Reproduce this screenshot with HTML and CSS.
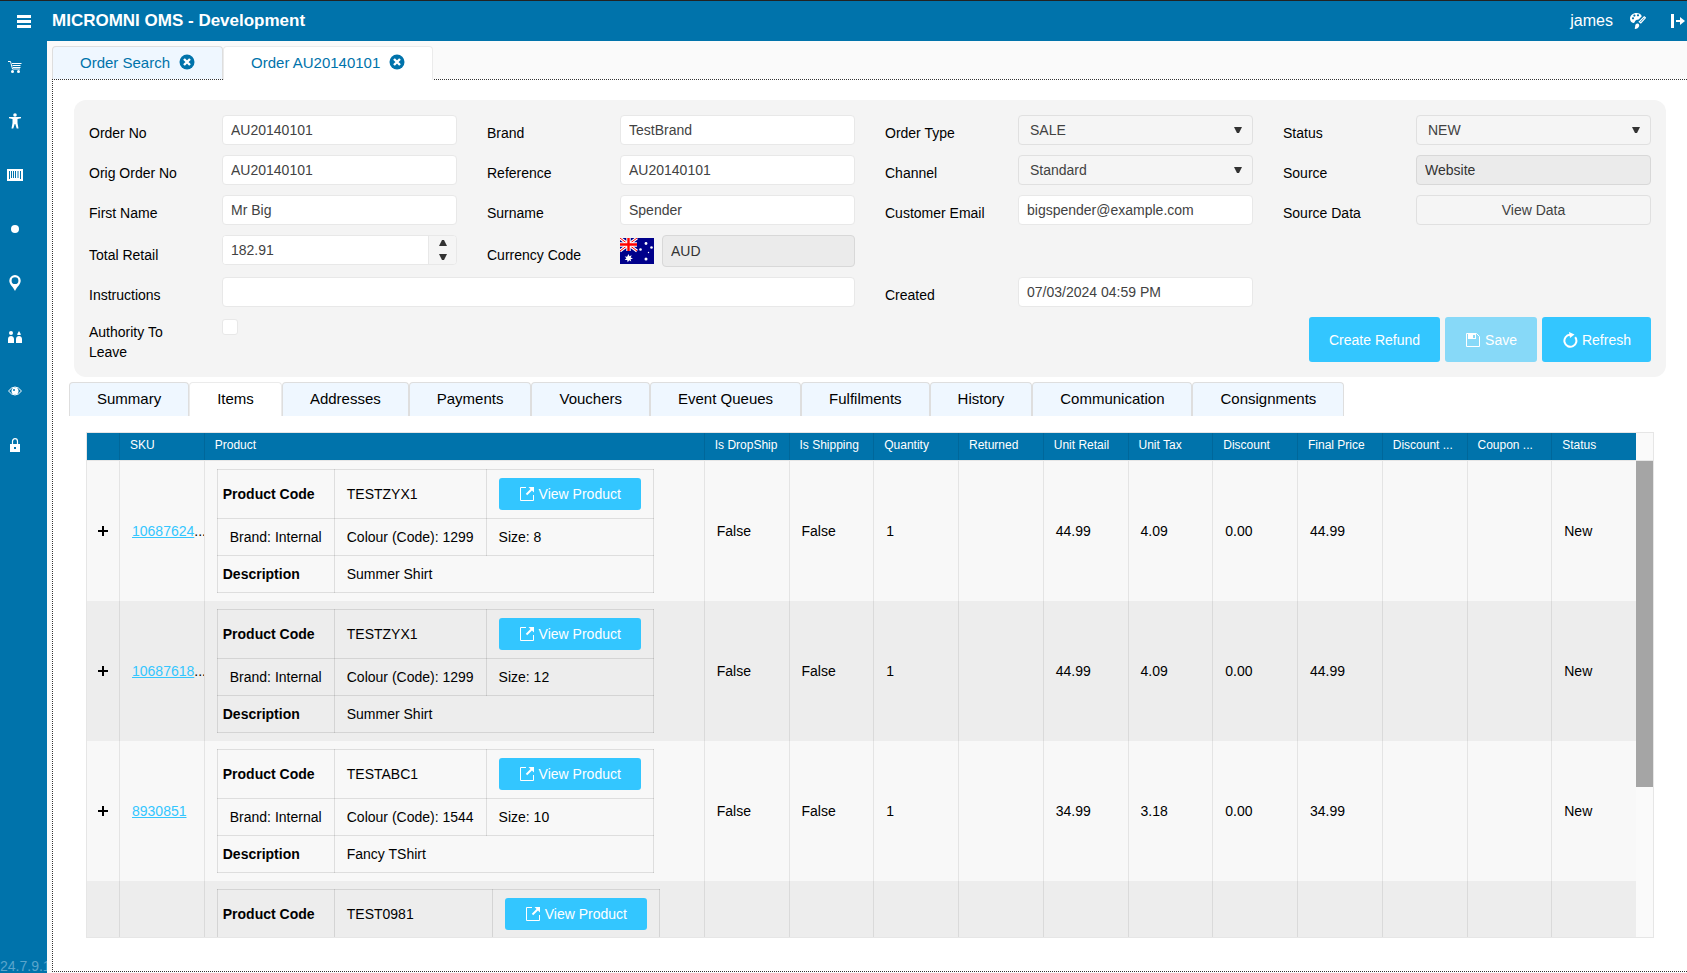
FILE: index.html
```html
<!DOCTYPE html>
<html lang="en">
<head>
    <meta charset="UTF-8">
    <meta name="viewport" content="width=device-width, initial-scale=1.0">
    <title>MICROMNI OMS - Development</title>
    <link rel="stylesheet" href="styles.css">
</head>
<body>
    <!-- Shared icons -->
    <svg class="sprite" aria-hidden="true">
        <symbol id="i-open" viewBox="0 0 16 16">
            <path d="M7 1.500H1.500v13h13V9" fill="none" stroke="currentColor"/>
            <path d="M9.500 1H15v5.500z" fill="currentColor"/>
            <path d="M7.500 8.500L13 3" stroke="currentColor" stroke-width="2"/>
        </symbol>
        <symbol id="i-close" viewBox="0 0 16 16">
            <circle cx="8" cy="8" r="7.5" fill="currentColor"/>
            <path d="M5 5l6 6M11 5l-6 6" stroke="#fff" stroke-width="2.4"/>
        </symbol>
        <symbol id="i-plus" viewBox="0 0 10 10">
            <path d="M5 0v10M0 5h10" stroke="currentColor" stroke-width="2"/>
        </symbol>
    </svg>

    <header class="topbar">
        <button class="icon-btn menu-btn" aria-label="Menu">
            <svg width="14" height="13" viewBox="0 0 14 13"><path d="M0 0h14v3H0zM0 5h14v3H0zM0 10h14v3H0z" fill="currentColor"/></svg>
        </button>
        <h1 class="title">MICROMNI OMS - Development</h1>
        <span class="user">james</span>
        <button class="icon-btn theme-btn" aria-label="Theme">
            <svg width="16" height="16" viewBox="0 0 16 16">
                <path fill-rule="evenodd" fill="currentColor" d="M6.500 0C2.800 0 0 2.600 0 5.600 0 8.200 1.600 10 3.300 10 5 10 4.500 8 6 7.200 7.400 6.400 8.200 7.300 9.400 5.800L11.800 3.200C11 1.200 9 0 6.500 0zM3 4.200a1.100 1.100 0 1 0 0 2.200 1.100 1.100 0 0 0 0-2.200zM4.400 1.500a1.100 1.100 0 1 0 0 2.200 1.100 1.100 0 0 0 0-2.200zM8 1.200a1.100 1.100 0 1 0 0 2.200 1.100 1.100 0 0 0 0-2.200z"/>
                <path fill="currentColor" d="M5 16c-.6-.8.2-1.600.2-3 0-1.700 1.200-2.600 2.400-2.400 1.300.2 2 1.300 1.500 2.700C8.500 15 7 15.800 5 16z"/>
                <path fill="none" stroke="currentColor" stroke-width="1.200" d="M9.200 8.800l5-5 1.200 1-4.600 5.200z"/>
            </svg>
        </button>
        <button class="icon-btn logout-btn" aria-label="Log out">
            <svg width="14" height="14" viewBox="0 0 14 14"><path d="M0 0h3v14H0zM5 6h4V3l5 4-5 4V8H5z" fill="currentColor"/></svg>
        </button>
    </header>

    <div class="layout">
        <nav class="sidebar">
            <a href="#" aria-label="Orders"><svg width="14" height="14" viewBox="0 0 14 14"><path d="M0 1.500h2.500l2 7.500H12" fill="none" stroke="currentColor"/><path d="M4 3.500h9.500M4.500 5.500h8M5 7.500h7.500" stroke="currentColor"/><circle cx="4.500" cy="11.500" r="1.500" fill="currentColor"/><circle cx="10.500" cy="11.500" r="1.500" fill="currentColor"/></svg></a>
            <a href="#" aria-label="Customers"><svg width="14" height="16" viewBox="0 0 14 16"><circle cx="7" cy="2" r="1.800" fill="currentColor"/><path d="M1 4h12v1.300L9.500 6v4l1 5.500H8.700L7.300 11h-.6l-1.400 4.500H3.500l1-5.500V6L1 5.300z" fill="currentColor"/></svg></a>
            <a href="#" aria-label="Products"><svg width="16" height="12" viewBox="0 0 16 12"><path d="M0 0h16v12H0z" fill="currentColor"/><path d="M2.500 2v8M4.500 2v7M6.500 2v7M8.500 2v7M11 2v7M13.500 2v8" stroke="#0073ab"/></svg></a>
            <a href="#" aria-label="Stock"><svg width="8" height="8" viewBox="0 0 8 8"><circle cx="4" cy="4" r="4" fill="currentColor"/></svg></a>
            <a href="#" aria-label="Locations"><svg width="12" height="16" viewBox="0 0 12 16"><path fill-rule="evenodd" d="M6 0a5.700 5.700 0 0 0-5.700 5.700C.3 9.500 4 11.500 6 16c2-4.500 5.700-6.500 5.700-10.300A5.700 5.700 0 0 0 6 0zm0 2.300a3.400 3.400 0 1 1 0 6.800 3.400 3.400 0 0 1 0-6.800z" fill="currentColor"/></svg></a>
            <a href="#" aria-label="Users"><svg width="14" height="12" viewBox="0 0 14 12"><circle cx="3" cy="2" r="2" fill="currentColor"/><path d="M0 12V8c0-4 6-4 6 0v4zM8 12V8c0-4 6-4 6 0v4zM11 0l2 3.500q-2 1-4 0z" fill="currentColor"/></svg></a>
            <a href="#" aria-label="Monitor"><svg width="14" height="10" viewBox="0 0 14 10"><path d="M.5 5Q3.500 1 7 1t6.500 4Q10.500 9 7 9T.5 5z" fill="none" stroke="currentColor"/><circle cx="7" cy="5" r="3.500" fill="currentColor"/><circle cx="6" cy="4" r="1" fill="#0073ab"/></svg></a>
            <a href="#" aria-label="Security"><svg width="10" height="14" viewBox="0 0 10 14"><path d="M2.500 6V3.500a2.500 2.800 0 0 1 5 0V6" fill="none" stroke="currentColor" stroke-width="1.200"/><path fill-rule="evenodd" d="M0 6h10v8H0zM4 9v2h2V9z" fill="currentColor"/></svg></a>
            <span class="version">24.7.9.1</span>
        </nav>

        <main class="main">
            <ul class="tabs page-tabs">
                <li class="tab">
                    <a href="#">Order Search</a>
                    <button class="close-btn" aria-label="Close Order Search"><svg><use href="#i-close"/></svg></button>
                </li>
                <li class="tab active">
                    <a href="#">Order AU20140101</a>
                    <button class="close-btn" aria-label="Close Order AU20140101"><svg><use href="#i-close"/></svg></button>
                </li>
            </ul>

            <section class="panel">
                <form class="order-form">
                    <div class="field">
                        <label for="orderNo">Order No</label>
                        <input class="control" id="orderNo" type="text" value="AU20140101">
                    </div>
                    <div class="field">
                        <label for="brand">Brand</label>
                        <input class="control" id="brand" type="text" value="TestBrand">
                    </div>
                    <div class="field">
                        <label for="orderType">Order Type</label>
                        <select class="control" id="orderType"><option>SALE</option></select>
                    </div>
                    <div class="field">
                        <label for="status">Status</label>
                        <select class="control" id="status"><option>NEW</option></select>
                    </div>

                    <div class="field">
                        <label for="origOrderNo">Orig Order No</label>
                        <input class="control" id="origOrderNo" type="text" value="AU20140101">
                    </div>
                    <div class="field">
                        <label for="reference">Reference</label>
                        <input class="control" id="reference" type="text" value="AU20140101">
                    </div>
                    <div class="field">
                        <label for="channel">Channel</label>
                        <select class="control" id="channel"><option>Standard</option></select>
                    </div>
                    <div class="field">
                        <label for="source">Source</label>
                        <input class="control" id="source" type="text" value="Website" readonly>
                    </div>

                    <div class="field">
                        <label for="firstName">First Name</label>
                        <input class="control" id="firstName" type="text" value="Mr Big">
                    </div>
                    <div class="field">
                        <label for="surname">Surname</label>
                        <input class="control" id="surname" type="text" value="Spender">
                    </div>
                    <div class="field">
                        <label for="email">Customer Email</label>
                        <input class="control" id="email" type="email" value="bigspender@example.com">
                    </div>
                    <div class="field">
                        <label for="sourceData">Source Data</label>
                        <button class="control view-data" id="sourceData" type="button">View Data</button>
                    </div>

                    <div class="field">
                        <label for="totalRetail">Total Retail</label>
                        <div class="control spinner">
                            <input id="totalRetail" type="text" value="182.91">
                            <div class="spinner-btns">
                                <button type="button" aria-label="Increase"><svg width="8" height="6" viewBox="0 0 8 6"><path d="M3 0h2l3 6H0z" fill="currentColor"/></svg></button>
                                <button type="button" aria-label="Decrease"><svg width="8" height="6" viewBox="0 0 8 6"><path d="M3 6h2l3-6H0z" fill="currentColor"/></svg></button>
                            </div>
                        </div>
                    </div>
                    <div class="field">
                        <label for="currency">Currency Code</label>
                        <div class="currency-row">
                            <svg class="flag" width="34" height="26" viewBox="0 0 34 26" role="img" aria-label="Australia">
                                <path d="M0 0h34v26H0z" fill="#00008b"/>
                                <path d="M0 0l17 13M17 0L0 13" stroke="#fff" stroke-width="3"/>
                                <path d="M0 0l17 13M17 0L0 13" stroke="#f00" stroke-width="1"/>
                                <path d="M8.500 0v13M0 6.500h17" stroke="#fff" stroke-width="4.400"/>
                                <path d="M8.500 0v13M0 6.500h17" stroke="#f00" stroke-width="2.400"/>
                                <path d="M8.500 16l.9 2.300 2.300-1-1 2.200 2.300 1-2.400.7.600 2.400-2-1.300-1.500 2-.5-2.400-2.500.2 1.700-1.800-1.700-1.700 2.400.2z" fill="#fff"/>
                                <g fill="#fff"><circle cx="26" cy="5.500" r="1.400"/><circle cx="20.500" cy="11.500" r="1.300"/><circle cx="31.500" cy="9.500" r="1.300"/><circle cx="28.500" cy="14.500" r=".7"/><circle cx="26" cy="21" r="1.500"/></g>
                            </svg>
                            <input class="control" id="currency" type="text" value="AUD" readonly>
                        </div>
                    </div>

                    <div class="field wide new-row">
                        <label for="instructions">Instructions</label>
                        <input class="control" id="instructions" type="text">
                    </div>
                    <div class="field">
                        <label for="created">Created</label>
                        <input class="control" id="created" type="text" value="07/03/2024 04:59 PM">
                    </div>

                    <div class="field leave new-row">
                        <label for="atl">Authority To Leave</label>
                        <input class="check" id="atl" type="checkbox">
                    </div>
                    <div class="actions">
                        <button class="btn" type="button">Create Refund</button>
                        <button class="btn" type="button" disabled>
                            <svg viewBox="0 0 16 16"><path d="M1.500 1.500h10l3 3v10h-13z" fill="none" stroke="currentColor"/><path fill-rule="evenodd" d="M3 2h8v5H3zM8 3v3h2V3z" fill="currentColor"/></svg>
                            Save
                        </button>
                        <button class="btn" type="button">
                            <svg viewBox="0 0 16 16"><path d="M13.200 5.200A6 6 0 1 1 8 2.800" fill="none" stroke="currentColor" stroke-width="2"/><path d="M7 0l5.500 2.500L8 6z" fill="currentColor"/></svg>
                            Refresh
                        </button>
                    </div>
                </form>

                <ul class="tabs sub-tabs">
                    <li class="tab"><a href="#">Summary</a></li>
                    <li class="tab active"><a href="#">Items</a></li>
                    <li class="tab"><a href="#">Addresses</a></li>
                    <li class="tab"><a href="#">Payments</a></li>
                    <li class="tab"><a href="#">Vouchers</a></li>
                    <li class="tab"><a href="#">Event Queues</a></li>
                    <li class="tab"><a href="#">Fulfilments</a></li>
                    <li class="tab"><a href="#">History</a></li>
                    <li class="tab"><a href="#">Communication</a></li>
                    <li class="tab"><a href="#">Consignments</a></li>
                </ul>

                <div class="grid">
                    <div class="grid-header">
                        <table class="grid-table">
                            <colgroup><col class="col-expand"><col><col class="col-product"><col span="11"></colgroup>
                            <thead>
                                <tr>
                                    <th></th>
                                    <th>SKU</th>
                                    <th>Product</th>
                                    <th>Is DropShip</th>
                                    <th>Is Shipping</th>
                                    <th>Quantity</th>
                                    <th>Returned</th>
                                    <th>Unit Retail</th>
                                    <th>Unit Tax</th>
                                    <th>Discount</th>
                                    <th>Final Price</th>
                                    <th>Discount ...</th>
                                    <th>Coupon ...</th>
                                    <th>Status</th>
                                </tr>
                            </thead>
                        </table>
                    </div>
                    <div class="grid-body">
                        <div class="grid-content">
                            <table class="grid-table">
                                <colgroup><col class="col-expand"><col><col class="col-product"><col span="11"></colgroup>
                                <tbody>
                                    <tr>
                                        <td class="expand"><button aria-label="Expand"><svg><use href="#i-plus"/></svg></button></td>
                                        <td><a href="#">10687624</a>...</td>
                                        <td>
                                            <table class="product">
                                                <tr><th>Product Code</th><td>TESTZYX1</td><td><button class="btn btn-sm"><svg><use href="#i-open"/></svg>View Product</button></td></tr>
                                                <tr><td>Brand: Internal</td><td>Colour (Code): 1299</td><td>Size: 8</td></tr>
                                                <tr><th>Description</th><td colspan="2">Summer Shirt</td></tr>
                                            </table>
                                        </td>
                                        <td>False</td><td>False</td><td>1</td><td></td><td>44.99</td><td>4.09</td><td>0.00</td><td>44.99</td><td></td><td></td><td>New</td>
                                    </tr>
                                    <tr>
                                        <td class="expand"><button aria-label="Expand"><svg><use href="#i-plus"/></svg></button></td>
                                        <td><a href="#">10687618</a>...</td>
                                        <td>
                                            <table class="product">
                                                <tr><th>Product Code</th><td>TESTZYX1</td><td><button class="btn btn-sm"><svg><use href="#i-open"/></svg>View Product</button></td></tr>
                                                <tr><td>Brand: Internal</td><td>Colour (Code): 1299</td><td>Size: 12</td></tr>
                                                <tr><th>Description</th><td colspan="2">Summer Shirt</td></tr>
                                            </table>
                                        </td>
                                        <td>False</td><td>False</td><td>1</td><td></td><td>44.99</td><td>4.09</td><td>0.00</td><td>44.99</td><td></td><td></td><td>New</td>
                                    </tr>
                                    <tr>
                                        <td class="expand"><button aria-label="Expand"><svg><use href="#i-plus"/></svg></button></td>
                                        <td><a href="#">8930851</a></td>
                                        <td>
                                            <table class="product">
                                                <tr><th>Product Code</th><td>TESTABC1</td><td><button class="btn btn-sm"><svg><use href="#i-open"/></svg>View Product</button></td></tr>
                                                <tr><td>Brand: Internal</td><td>Colour (Code): 1544</td><td>Size: 10</td></tr>
                                                <tr><th>Description</th><td colspan="2">Fancy TShirt</td></tr>
                                            </table>
                                        </td>
                                        <td>False</td><td>False</td><td>1</td><td></td><td>34.99</td><td>3.18</td><td>0.00</td><td>34.99</td><td></td><td></td><td>New</td>
                                    </tr>
                                    <tr class="partial">
                                        <td></td>
                                        <td></td>
                                        <td>
                                            <table class="product product-wide">
                                                <tr><th>Product Code</th><td>TEST0981</td><td><button class="btn btn-sm"><svg><use href="#i-open"/></svg>View Product</button></td></tr>
                                            </table>
                                        </td>
                                        <td></td><td></td><td></td><td></td><td></td><td></td><td></td><td></td><td></td><td></td><td></td>
                                    </tr>
                                </tbody>
                            </table>
                        </div>
                        <div class="scroll-track"><div class="scroll-thumb"></div></div>
                    </div>
                </div>
            </section>
        </main>
    </div>
</body>
</html>
```

FILE: styles.css
```css
* {
    margin: 0;
    padding: 0;
    box-sizing: border-box;
}

body {
    font-family: "Liberation Sans", Arial, sans-serif;
    font-size: 14px;
    line-height: 20px;
    color: #000;
    background: #fafafa;
    border-top: 1px solid #222;
    height: 100vh;
    display: flex;
    flex-direction: column;
    overflow: hidden;
}

button, input, select {
    font: inherit;
    color: inherit;
}

button {
    border: none;
    background: none;
    cursor: pointer;
}

svg {
    display: block;
    flex: none;
}

.sprite {
    position: absolute;
    width: 0;
    height: 0;
}

/* Top bar */
.topbar {
    display: flex;
    align-items: center;
    height: 40px;
    flex: none;
    padding: 0 2px 0 17px;
    background: #0073ab;
    color: #fff;
}

.title {
    font-size: 17px;
    margin-left: 21px;
    margin-right: auto;
}

.user {
    font-size: 16px;
}

.theme-btn {
    margin-left: 17px;
}

.logout-btn {
    margin-left: 25px;
}

/* Sidebar */
.layout {
    display: flex;
    flex: 1;
    min-height: 0;
}

.sidebar {
    display: flex;
    flex-direction: column;
    width: 47px;
    flex: none;
    overflow: hidden;
    background: #0073ab;
    color: #fff;
}

.sidebar a {
    display: flex;
    align-items: center;
    justify-content: center;
    width: 30px;
    height: 54px;
    padding-bottom: 2px;
    color: #fff;
}

.version {
    margin-top: auto;
    line-height: 14px;
    color: #5aa5cb;
}

/* Tabs */
.main {
    display: flex;
    flex-direction: column;
    flex: 1;
    min-width: 0;
    padding: 5px 0 1px 5px;
}

.tabs {
    display: flex;
    list-style: none;
    flex: none;
    font-size: 15px;
}

.tab {
    display: flex;
    align-items: center;
    gap: 9px;
    height: 34px;
    padding: 0 27px 1px;
    background: #eff7ff;
    border: 1px solid #dedede;
    border-bottom: none;
    border-radius: 4px 4px 0 0;
}

.tab a {
    color: inherit;
    text-decoration: none;
}

.tab.active {
    background: #fff;
    border-color: #ebebeb;
}

.page-tabs {
    color: #0073ab;
    margin-bottom: -1px;
    z-index: 1;
}

.page-tabs .tab:not(.active) {
    height: 33px;
}

.close-btn {
    padding-bottom: 2px;
}

.close-btn svg {
    width: 16px;
    height: 16px;
}

.panel {
    display: flex;
    flex-direction: column;
    flex: 1;
    min-height: 0;
    padding: 20px 16px 33px;
    background: #fff;
    border: 1px dotted #333;
    border-right: none;
}

/* Order details */
.order-form {
    display: grid;
    grid-template-columns: repeat(4, minmax(0, 1fr));
    gap: 10px 30px;
    margin: 0 5px 5px;
    padding: 15px;
    background: #f4f4f4;
    border-radius: 12px;
}

.field {
    display: grid;
    grid-template-columns: 133px minmax(0, 1fr);
    align-items: start;
}

.field label {
    align-self: end;
    padding-top: 8px;
    height: 30px;
}

.field.leave label {
    align-self: start;
    padding: 5px 40px 0 0;
    height: auto;
}

.field.wide {
    grid-column: 1 / span 2;
}

.new-row {
    grid-column-start: 1;
}

.control {
    width: 100%;
    height: 30px;
    padding: 0 8px;
    color: #424242;
    background: #fff;
    border: 1px solid #e8e8e8;
    border-radius: 4px;
    outline: none;
}

.control[readonly] {
    color: #333;
    background: #ebebeb;
    border-color: #d8d8d8;
}

select.control {
    appearance: none;
    padding: 0 30px 0 11px;
    background: #f5f5f5 url("data:image/svg+xml,%3Csvg xmlns='http://www.w3.org/2000/svg' width='8' height='6'%3E%3Cpath d='M0 0h8L5 6H3z' fill='%23333'/%3E%3C/svg%3E") no-repeat right 10px top 11px;
    border-color: #e0e0e0;
}

.view-data {
    background: #f5f5f5;
    border-color: #e0e0e0;
}

.spinner {
    display: flex;
    padding: 0;
    overflow: hidden;
}

.spinner input {
    flex: 1;
    min-width: 0;
    padding: 0 8px;
    border: none;
    outline: none;
}

.spinner-btns {
    display: flex;
    flex-direction: column;
    width: 28px;
    background: #f5f5f5;
    border-left: 1px solid #e8e8e8;
}

.spinner-btns button {
    display: flex;
    flex: 1;
    align-items: center;
    justify-content: center;
    color: #333;
}

.currency-row {
    display: flex;
    align-items: center;
    gap: 8px;
}

.currency-row .control {
    flex: 1;
    min-width: 0;
    height: 32px;
}

.check {
    appearance: none;
    width: 16px;
    height: 16px;
    margin-top: 2px;
    background: #fff;
    border: 1px solid #e8e8e8;
    border-radius: 3px;
}

.actions {
    display: flex;
    gap: 5px;
    grid-column: 3 / span 2;
    justify-content: flex-end;
}

.btn {
    display: flex;
    align-items: center;
    gap: 4px;
    height: 45px;
    padding: 0 20px;
    color: #fff;
    background: #33c6ff;
    border-radius: 3px;
    white-space: nowrap;
}

.btn svg {
    width: 16px;
    height: 16px;
}

.btn:disabled {
    background: #87d9f8;
}

.btn-sm {
    height: 32px;
}

/* Items grid */
.grid {
    display: flex;
    flex-direction: column;
    flex: 1;
    min-height: 0;
    margin: 16px 17px 0;
    border: 1px solid #e6e6e6;
}

.grid-header {
    flex: none;
    padding-right: 17px;
    background: #fafafa;
    border-bottom: 1px solid #e6e6e6;
}

.grid-body {
    display: flex;
    flex: 1;
    min-height: 0;
}

.grid-content {
    flex: 1;
    min-width: 0;
    overflow: hidden;
}

.scroll-track {
    width: 17px;
    background: #fafafa;
}

.scroll-thumb {
    height: 68.5%;
    background: #a5a5a5;
}

.grid-table {
    width: 100%;
    table-layout: fixed;
    border-collapse: separate;
    border-spacing: 0;
}

.col-expand {
    width: 32px;
}

.col-product {
    width: 500px;
}

.grid-header th {
    height: 27px;
    padding: 0 0 3px 10px;
    font-size: 12px;
    font-weight: 500;
    line-height: 16px;
    text-align: left;
    white-space: nowrap;
    color: #fff;
    background: #0073ab;
    border-left: 1px solid #00679a;
}

.grid-content > .grid-table > tbody > tr > td {
    height: 140px;
    padding: 8px 0 8px 12px;
    white-space: nowrap;
    overflow: hidden;
    border-left: 1px solid rgba(0, 0, 0, 0.08);
}

.grid-table > thead > tr > th:first-child,
.grid-content > .grid-table > tbody > tr > td:first-child {
    padding-left: 11px;
    border-left: none;
}

.grid-content > .grid-table > tbody > tr {
    background: #f8f8f8;
}

.grid-content > .grid-table > tbody > tr:nth-child(even) {
    background: #ededed;
}

.grid-content > .grid-table > tbody > .partial > td {
    vertical-align: top;
}

.grid-content td a {
    color: #33c6ff;
}

.expand button {
    display: block;
}

.expand svg {
    width: 10px;
    height: 10px;
}

.product {
    border-collapse: collapse;
}

.product th,
.product td {
    height: 37px;
    padding: 8px 12px;
    text-align: left;
    border: 1px solid rgba(0, 0, 0, 0.1);
}

.product th {
    min-width: 117px;
    padding: 8px 5px;
}

.product-wide th + td {
    min-width: 158px;
}
```
